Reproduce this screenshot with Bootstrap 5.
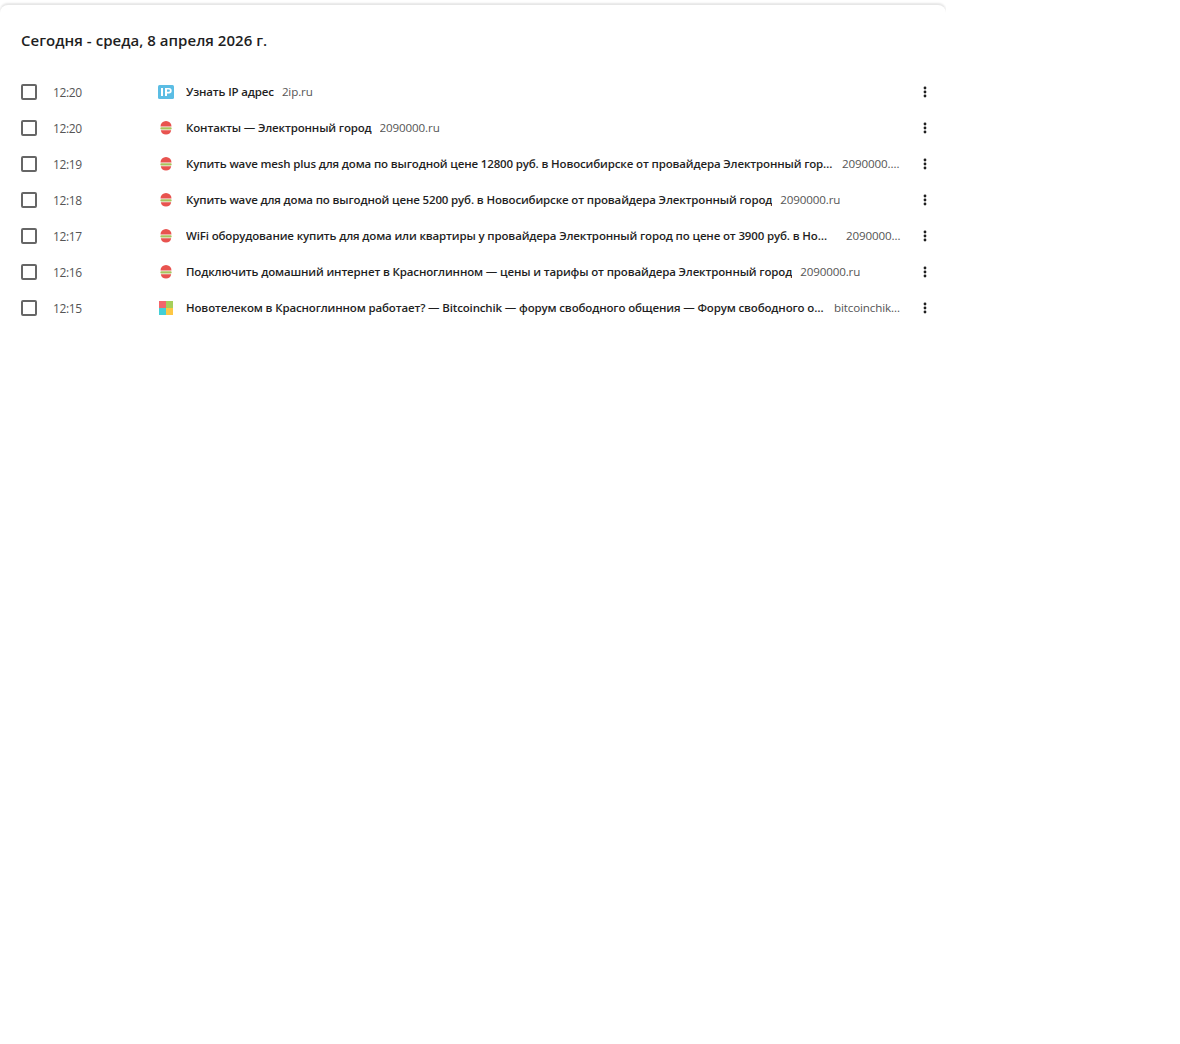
<!doctype html>
<html lang="ru"><head><meta charset="utf-8"><title>История</title>
<link href="https://cdn.jsdelivr.net/npm/bootstrap@5.3.0/dist/css/bootstrap.min.css" rel="stylesheet">
<style>
html,body{background:#fff;margin:0;height:100%}
body{font-family:"Open Sans","Noto Sans",sans-serif;color:#1f1f1f;overflow:hidden}
.hist-panel{width:946px;height:1044px;margin-top:5px;background:#fff;border-radius:8px 8px 0 0;box-shadow:0 -1.5px 2px rgba(0,0,0,.1);clip-path:inset(-5px 0 0 0)}
.hist-head{font-size:15px;font-weight:600;line-height:20px;padding:25px 21px 0;height:69px;margin:0;letter-spacing:.03px}
.hist-row{height:36px;padding:0 13px 0 21px}
.hist-box{width:16px;height:16px;flex:none;border:2px solid #666;border-radius:2px}
.hist-time{width:105px;flex:none;margin-left:16px;padding-top:2px;font-size:12px;color:#555;letter-spacing:-.35px}
.hist-fav{width:16px;height:16px;flex:none;margin-right:12px}
.hist-text{flex:1 1 auto;min-width:0;gap:8px;padding-right:16px}
.hist-title{font-size:11.5px;font-weight:600;color:#1f1f1f;flex:0 1 auto;letter-spacing:-.15px}
.hist-url{font-size:11.6px;color:#555;flex:0 1 auto;letter-spacing:-.13px}
.hist-title,.hist-url{white-space:nowrap;overflow:hidden;text-overflow:ellipsis}
.hist-url.short{flex:0 0 auto}
.hist-more{width:16px;height:16px;flex:none}
</style></head><body>
<main class="hist-panel">
<h1 class="hist-head">Сегодня - среда, 8 апреля 2026 г.</h1>
<div id="rows"></div>
</main>
<svg width="0" height="0" class="position-absolute"><defs>
<symbol id="f-ip" viewBox="0 0 16 16"><rect y="1" width="16" height="14" rx="1.5" fill="#5bbde4"/><rect x="3" y="4" width="2" height="8" fill="#fff"/><path d="M7 4h4a2.6 2.6 0 0 1 0 5.4H9V12H7zM9 5.600v2.200h1.800a1.100 1.100 0 0 0 0-2.200z" fill="#fff"/></symbol>
<symbol id="f-eg" viewBox="0 0 16 16"><path d="M2.500 6.500a5.500 5.500 0 0 1 11 0z" fill="#e8534f"/><rect x="2.300" y="7.300" width="11.400" height="2.200" rx="1.100" fill="#a9c25d"/><path d="M2.800 10.200h10.400A5.400 5.400 0 0 1 8 14.600a5.400 5.400 0 0 1-5.200-4.400z" fill="#e8534f"/></symbol>
<symbol id="f-bc" viewBox="0 0 16 16"><rect x="1" y="1" width="7" height="7" fill="#f2666b"/><rect x="8" y="1" width="7" height="7" fill="#a6cf5a"/><rect x="1" y="8" width="7" height="7" fill="#43cfd6"/><rect x="8" y="8" width="7" height="7" fill="#fdc745"/></symbol>
<symbol id="f-more" viewBox="0 0 16 16"><circle cx="8" cy="4" r="1.400" fill="#1f1f1f"/><circle cx="8" cy="8" r="1.400" fill="#1f1f1f"/><circle cx="8" cy="12" r="1.400" fill="#1f1f1f"/></symbol>
</defs></svg>
<script>
const data=[
["12:20","f-ip","Узнать IP адрес","2ip.ru",0,0],
["12:20","f-eg","Контакты — Электронный город","2090000.ru",0,0],
["12:19","f-eg","Купить wave mesh plus для дома по выгодной цене 12800 руб. в Новосибирске от провайдера Электронный город","2090000.ru",59,0],
["12:18","f-eg","Купить wave для дома по выгодной цене 5200 руб. в Новосибирске от провайдера Электронный город","2090000.ru",0,0],
["12:17","f-eg","WiFi оборудование купить для дома или квартиры у провайдера Электронный город по цене от 3900 руб. в Новосибирске","2090000.ru",55,6],
["12:16","f-eg","Подключить домашний интернет в Красноглинном — цены и тарифы от провайдера Электронный город","2090000.ru",0,0],
["12:15","f-bc","Новотелеком в Красноглинном работает? — Bitcoinchik — форум свободного общения — Форум свободного общения","bitcoinchik.com",67,0]];
document.getElementById('rows').innerHTML=data.map(d=>`<div class="hist-row d-flex align-items-center">
<span class="hist-box"></span><span class="hist-time">${d[0]}</span>
<svg class="hist-fav"><use href="#${d[1]}"/></svg>
<div class="hist-text d-flex align-items-center"><span class="hist-title">${d[2]}</span><span class="hist-url${d[4]?' short':''}"${d[4]?` style="width:${d[4]}px;margin-left:${d[5]}px"`:''}>${d[3]}</span></div>
<svg class="hist-more"><use href="#f-more"/></svg></div>`).join('');
</script>
<script src="https://cdn.jsdelivr.net/npm/bootstrap@5.3.0/dist/js/bootstrap.bundle.min.js"></script>
</body></html>
